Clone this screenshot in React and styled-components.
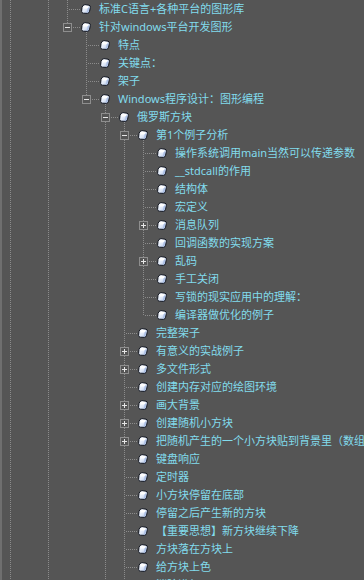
import React from "react";
import styled, { createGlobalStyle } from "styled-components";

const LINE = "#8c8c8c";
const dotsV = `repeating-linear-gradient(to bottom, ${LINE} 0 1px, transparent 1px 2px)`;
const dotsH = `repeating-linear-gradient(to right, ${LINE} 0 1px, transparent 1px 2px)`;

const GlobalStyle = createGlobalStyle`
  html, body {
    margin: 0;
    padding: 0;
    background: #555555;
    overflow: hidden;
  }
`;

const Tree = styled.div`
  width: 364px;
  height: 580px;
  box-sizing: border-box;
  border-left: 2px solid #6f6f6f;
  background: #555555;
  overflow: hidden;
  font-family: "Noto Sans", "Noto Sans CJK SC", sans-serif;
  font-size: 11px;
  color: #82dced;
  white-space: nowrap;
`;

const Row = styled.div`
  display: flex;
  height: 18px;
`;

const Guide = styled.div`
  flex: none;
  width: 19px;
  background: ${(p) => (p.$line ? `${dotsV} 8px 0 / 1px 100% no-repeat` : "none")};
`;

const Connector = styled.div`
  flex: none;
  width: 22px;
  display: flex;
  align-items: center;
  background: ${dotsV} 8px 0 / 1px ${(p) => (p.$last ? "10px" : "100%")} no-repeat,
    ${dotsH} 10px 9px / 12px 1px no-repeat;
`;

const Toggle = styled.div`
  width: 9px;
  height: 9px;
  box-sizing: border-box;
  margin-left: 4px;
  margin-top: 1px;
  border: 1px solid #8e8e8e;
  background: #555555;
  display: flex;
  align-items: center;
  justify-content: center;
`;

const BulletCell = styled.div`
  flex: none;
  width: 18px;
  box-sizing: border-box;
  padding-top: 2px;
  background: ${(p) => (p.$open ? `${dotsV} 5px 14px / 1px 4px no-repeat` : "none")};
`;

const Label = styled.span`
  line-height: 17px;
`;

const Sign = ({ open }) => (
  <svg width="7" height="7" viewBox="0 0 7 7">
    <rect x="1" y="3" width="5" height="1" fill="#e6e6e6" />
    {!open && <rect x="3" y="1" width="1" height="5" fill="#e6e6e6" />}
  </svg>
);

const Gem = () => (
  <svg width="10" height="10" viewBox="0 0 10 10">
    <defs>
      <linearGradient id="gem" x1="0" y1="0" x2="1" y2="1">
        <stop offset="0" stopColor="#ffffff" />
        <stop offset="0.55" stopColor="#dfe8f8" />
        <stop offset="1" stopColor="#94acd8" />
      </linearGradient>
    </defs>
    <path
      d="M4 0.6 L8 1.2 Q9.5 1.6 9.4 3.2 L8.6 7.2 Q8.2 9.2 6.4 9.4 L2.4 9.2 Q0.6 9 0.6 7.4 L1 3.4 Q1.4 1 4 0.6 Z"
      fill="url(#gem)"
      stroke="#121620"
      strokeWidth="1"
    />
    <path d="M3.4 1.8 L7.6 2.2 L6.6 4.6 L2.2 4.4 Z" fill="#ffffff" />
    <path d="M6.6 4.6 L8.4 2.8 L7.6 7.6 L6 8.4 Z" fill="#a9bde4" />
  </svg>
);

const data = [
  { label: "标准C语言+各种平台的图形库" },
  {
    label: "针对windows平台开发图形",
    open: true,
    children: [
      { label: "特点" },
      { label: "关键点：" },
      { label: "架子" },
      {
        label: "Windows程序设计：图形编程",
        open: true,
        children: [
          {
            label: "俄罗斯方块",
            open: true,
            more: true,
            children: [
              {
                label: "第1个例子分析",
                open: true,
                children: [
                  { label: "操作系统调用main当然可以传递参数" },
                  { label: "__stdcall的作用" },
                  { label: "结构体" },
                  { label: "宏定义" },
                  { label: "消息队列", closed: true },
                  { label: "回调函数的实现方案" },
                  { label: "乱码", closed: true },
                  { label: "手工关闭" },
                  { label: "写锁的现实应用中的理解：" },
                  { label: "编译器做优化的例子" },
                ],
              },
              { label: "完整架子" },
              { label: "有意义的实战例子", closed: true },
              { label: "多文件形式", closed: true },
              { label: "创建内存对应的绘图环境" },
              { label: "画大背景", closed: true },
              { label: "创建随机小方块", closed: true },
              { label: "把随机产生的一个小方块贴到背景里（数组）", closed: true },
              { label: "键盘响应" },
              { label: "定时器" },
              { label: "小方块停留在底部" },
              { label: "停留之后产生新的方块" },
              { label: "【重要思想】新方块继续下降" },
              { label: "方块落在方块上" },
              { label: "给方块上色" },
              { label: "消除满行", more: true },
            ],
          },
        ],
      },
    ],
  },
];

// flatten the tree into rows, keeping which ancestor lines still run down
function flatten(nodes, guides, out) {
  nodes.forEach((node, i) => {
    const last = i === nodes.length - 1 && !node.more;
    out.push({ node, guides, last });
    if (node.open && node.children) flatten(node.children, [...guides, !last], out);
  });
  return out;
}

const rows = flatten(data, [true, false, true], []);

export default function App() {
  return (
    <>
      <GlobalStyle />
      <Tree>
        {rows.map(({ node, guides, last }, i) => (
          <Row key={i}>
            {guides.map((g, j) => (
              <Guide key={j} $line={g} />
            ))}
            <Connector $last={last}>
              {(node.open || node.closed) && (
                <Toggle>
                  <Sign open={node.open} />
                </Toggle>
              )}
            </Connector>
            <BulletCell $open={node.open}>
              <Gem />
            </BulletCell>
            <Label>{node.label}</Label>
          </Row>
        ))}
      </Tree>
    </>
  );
}
